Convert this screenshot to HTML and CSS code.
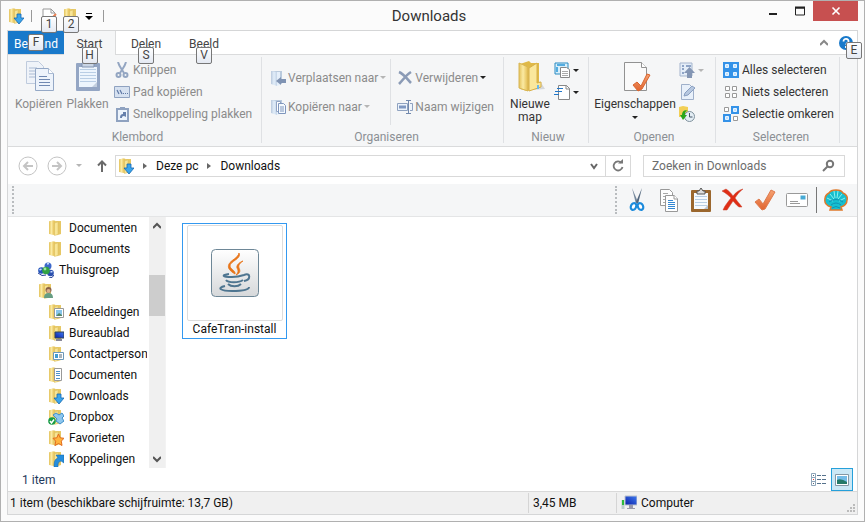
FILE: index.html
```html
<!DOCTYPE html>
<html lang="nl">
<head>
<meta charset="utf-8">
<title>Downloads</title>
<link rel="stylesheet" href="styles.css">
</head>
<body>
<svg class="defs" aria-hidden="true">
  <defs>
    <linearGradient id="gold" x1="0" x2="1"><stop offset="0" stop-color="#e3c25c"/><stop offset=".45" stop-color="#fbeaa2"/><stop offset="1" stop-color="#e2bb4d"/></linearGradient>
    <linearGradient id="pale" x1="0" x2="1"><stop offset="0" stop-color="#b9c9dd"/><stop offset=".5" stop-color="#e2eefa"/><stop offset="1" stop-color="#c3d3e6"/></linearGradient>
    <linearGradient id="tile" x1="0" x2="0" y1="0" y2="1"><stop offset="0" stop-color="#fff"/><stop offset="1" stop-color="#d6d8da"/></linearGradient>
    <linearGradient id="orange" x1="0" x2="0" y1="0" y2="1"><stop offset="0" stop-color="#f6a272"/><stop offset="1" stop-color="#e0642f"/></linearGradient>
    <linearGradient id="screen" x1="0" x2="1" y1="1" y2="0"><stop offset="0" stop-color="#0a1ea8"/><stop offset="1" stop-color="#3f7bf0"/></linearGradient>
    <symbol id="folder" viewBox="0 0 16 16">
      <path d="M1 1.500 5 .5 8 1h5v13l-5 1-7-1z" fill="#e9cd6c"/>
      <path d="M8 1.500h5V14l-5 1z" fill="#e6c765"/>
      <path d="M1 1.500 6.500.5V15L1 13.500z" fill="url(#gold)"/>
      <path d="M6.500 3 10 1.800V14.500L6.500 15.500z" fill="#f8e596" stroke="#d9b95a" stroke-width=".5"/>
    </symbol>
    <symbol id="down" viewBox="0 0 16 16"><path d="M9 6h4v4h3l-5 6-5-6h3z" fill="#3aa5ec" stroke="#1467b2" stroke-width=".8"/></symbol>
    <symbol id="palefolder" viewBox="0 0 16 16"><path d="M1 1h11v13H5l-4-1z" fill="#b9cadd"/><path d="M1 1l6 1v14l-6-2z" fill="url(#pale)"/><path d="M7 2h3v13l-3 1z" fill="#e5effa"/></symbol>
    <symbol id="check" viewBox="0 0 24 24"><path d="M2 14 6 11l4 5L18 2l4 2L12 21 9 22z" fill="url(#orange)" stroke="#dd7b4e"/></symbol>
    <symbol id="sel-on" viewBox="0 0 8 8"><path d="M0 0h8v8H0z" fill="#3492e8"/><path d="M2.500 2.500h3v3h-3z" fill="#bfe1ff" stroke="#e9f5ff"/></symbol>
    <symbol id="sel-off" viewBox="0 0 8 8"><path d="M1.500 1.500h4v4h-4z" fill="#fff" stroke="#999"/></symbol>
  </defs>
</svg>

<div class="window">
  <header class="titlebar">
    <div class="quick">
      <svg class="i16" viewBox="0 0 16 16"><use href="#folder"/><use href="#down"/></svg>
      <span class="quick-sep"></span>
      <button class="tool" aria-label="Eigenschappen"><svg class="i16" viewBox="0 0 16 16"><path d="M2 1h8l4 4v10H2z" fill="#fff" stroke="#999"/><path d="M10 1v4h4" fill="none" stroke="#999"/><path d="M12 9l3-3" fill="none" stroke="#ed8050" stroke-width="2"/></svg><kbd class="tip">1</kbd></button>
      <button class="tool" aria-label="Nieuwe map"><svg class="i16"><use href="#folder"/></svg><kbd class="tip">2</kbd></button>
      <button class="tool" aria-label="Werkbalk aanpassen"><svg class="i8" viewBox="0 0 8 8"><path d="M1 1.500h6" stroke="#000"/><path d="M0 4h8L4 8z"/></svg></button>
      <span class="quick-sep"></span>
    </div>
    <h1>Downloads</h1>
    <div class="controls">
      <button aria-label="Minimaliseren"><svg viewBox="0 0 10 10"><path d="M1 8h8" stroke="#222" stroke-width="2"/></svg></button>
      <button aria-label="Maximaliseren"><svg viewBox="0 0 10 10"><path d="M.5 2h9v7h-9z" fill="none" stroke="#222"/><path d="M0 1.500h10" stroke="#222" stroke-width="2"/></svg></button>
      <button class="close" aria-label="Sluiten"><svg viewBox="0 0 10 10"><path d="M1.500 1.500l7 7m0-7-7 7" stroke="#fff" stroke-width="1.600"/></svg></button>
    </div>
  </header>

  <div class="frame">
    <nav class="tabs">
      <button class="tab file">Bestand<kbd class="tip">F</kbd></button>
      <button class="tab active">Start<kbd class="tip">H</kbd></button>
      <button class="tab">Delen<kbd class="tip">S</kbd></button>
      <button class="tab">Beeld<kbd class="tip">V</kbd></button>
      <span class="grow"></span>
      <button class="tool" aria-label="Lint samenvouwen"><svg class="i8" viewBox="0 0 8 8"><path d="M0 6l4-4 4 4" fill="none" stroke="#888" stroke-width="2"/></svg></button>
      <button class="tool help" aria-label="Help"><svg class="i14" viewBox="0 0 14 14"><circle cx="7" cy="7" r="7" fill="#1979ca"/><path d="M4.500 5.500c0-4 5.500-3 5 0-.3 1.500-2.300 1.500-2.300 3.300M7 10v2" fill="none" stroke="#fff" stroke-width="1.800"/></svg><kbd class="tip">E</kbd></button>
    </nav>

    <div class="ribbon">
      <section class="group clip">
        <div class="body">
          <button class="big off"><svg viewBox="0 0 32 32"><g fill="#edf3fb" stroke="#a9bad3"><path d="M3.500 1.500h12l5 5v17h-17z" opacity=".7"/><path d="M6 8h8m-8 3h7m-7 3h7m-7 3h7"/><path d="M12.500 8.500h13l5 5v17h-18z" stroke="#94a8c6"/><path d="M25.500 8.500v5h5" fill="#fff"/><path d="M16 16.500h8m-8 3h11m-11 3h11m-11 3h11" stroke="#6f88b2"/></g></svg>Kopiëren</button>
          <button class="big off"><svg viewBox="0 0 32 32"><rect x="4" y="3" width="24" height="28" rx="1" fill="#94a6c4"/><path d="M7 7h18v20H7z" fill="#edf5fd"/><path d="M8 9.500h16m-16 3h16m-16 3h16m-16 3h16m-16 3h16" stroke="#b9cee5"/><path d="M10 7V3h3l3-3 3 3h3v4z" fill="#c9d5e5" stroke="#8395b3"/><path d="M20 27h5v-5z" fill="#c3cfdf"/></svg>Plakken</button>
          <div class="stack">
            <button class="cmd off"><svg viewBox="0 0 16 16"><g fill="none" stroke="#94a6c2" stroke-width="2"><path d="M4 0c1 4 3 6 6 11M12 0C11 4 9 6 6 11"/><circle cx="4.500" cy="13" r="2"/><circle cx="11.500" cy="13" r="2"/></g></svg>Knippen</button>
            <button class="cmd off"><svg viewBox="0 0 16 16"><path d="M.5 2.500h15v11H.5z" fill="#d6e1f0" stroke="#8fa2c0"/><path d="M3 6l2 4m1-4 2 4m1-.5h1m1 0h1m1 0h1" stroke="#5f79a6" stroke-width="1.200"/></svg>Pad kopiëren</button>
            <button class="cmd off"><svg viewBox="0 0 16 16"><path d="M3 3h11v12H3z" fill="#edf4fc" stroke="#8fa2c0" stroke-width="2"/><path d="M6 1h5v3H6z" fill="#8fa2c0"/><path d="M6 12c0-3 1-4 3-4V6h3v5l-2-1c-2 0-2 1-2 2z" fill="#6680ac"/></svg>Snelkoppeling plakken</button>
          </div>
        </div>
        <h2>Klembord</h2>
      </section>

      <section class="group organise">
        <div class="body pair">
          <div class="stack">
            <button class="cmd off"><svg viewBox="0 0 16 16"><use href="#palefolder"/><path d="M6 11l5-4v2h5v4h-5v2z" fill="#7f93b3"/></svg>Verplaatsen naar<i class="caret"></i></button>
            <button class="cmd off"><svg viewBox="0 0 16 16"><use href="#palefolder"/><path d="M6.500 2.500h4v10h-4z" fill="#fff" stroke="#91a4c4"/><path d="M8.500 4.500h5l2 2v8h-7z" fill="#f5faff" stroke="#7f96bd"/><path d="M10 8h4m-4 2h4m-4 2h4" stroke="#7f96bd"/></svg>Kopiëren naar<i class="caret"></i></button>
          </div>
          <div class="stack ruled">
            <button class="cmd off"><svg viewBox="0 0 16 16"><path d="M2 2c5 2 8 7 12 11M14 2C9 5 6 10 2 14" fill="none" stroke="#8b9bb6" stroke-width="2.600"/></svg>Verwijderen<i class="caret dark"></i></button>
            <button class="cmd off"><svg viewBox="0 0 16 16"><path d="M.5 4.500h10v7H.5zM13 4.500h2.500v7H13" fill="#edf4fc" stroke="#8fa2c0"/><path d="M2 6.500h7v3H2z" fill="#7f98c2"/><path d="M9 1.500h5m-5 13h5M11.500 2v12" stroke="#7188ad"/></svg>Naam wijzigen</button>
          </div>
        </div>
        <h2>Organiseren</h2>
      </section>

      <section class="group new">
        <div class="body">
          <button class="big"><svg viewBox="0 0 32 32"><path d="M18 30l13-1-5-8z" fill="#d4d7da"/><path d="M6 4l9-3 2 2h8v20l1 4-13 4-7-2z" fill="#dfb948"/><path d="M15 8l8-5v20l4-1v5l-12 4z" fill="#fae79c" stroke="#d8b048"/><path d="M5 3l9 4v24l-9-3z" fill="url(#gold)" stroke="#d8b654"/><path d="M24 25v4" stroke="#69b7ed" stroke-width="2"/></svg>Nieuwe<br>map</button>
          <div class="stack">
            <button class="cmd"><svg viewBox="0 0 16 16"><path d="M1 1h13v11H1z" fill="#d9effa" stroke="#288bc2"/><path d="M3 3h8M3 5v5" stroke="#53ace0" stroke-width="2"/><path d="M6.500 5.500h6l3 2v8h-9z" fill="#fff" stroke="#888"/><path d="M8 9.500h6m-6 2h6m-6 2h6" stroke="#aaa"/></svg><i class="caret dark"></i></button>
            <button class="cmd"><svg viewBox="0 0 16 16"><path d="M4.500 1.500h8l3 3v11h-11z" fill="#fff" stroke="#888"/><path d="M12 1v4h4" fill="none" stroke="#888"/><path d="M3 4.500h6M1 7.500h7M0 10.500h5" stroke="#2277c9"/></svg><i class="caret dark"></i></button>
          </div>
        </div>
        <h2>Nieuw</h2>
      </section>

      <section class="group open">
        <div class="body">
          <button class="big"><svg viewBox="0 0 32 32"><path d="M5.500 2.500h17l5 5v23h-22z" fill="#fafafa" stroke="#929292"/><path d="M22.500 2.500v5h5" fill="#fff" stroke="#929292"/><path d="M14 25l4-3 4 4 6-12 3 1-8 14-4 2z" fill="url(#orange)" stroke="#d9652f"/></svg>Eigenschappen<i class="caret dark"></i></button>
          <div class="stack">
            <button class="cmd off"><svg viewBox="0 0 16 16"><path d="M1 1h12v13H1z" fill="#e4edf8" stroke="#a5b5cd"/><path d="M3 4h2m2 0h5M3 7h2m-2 4h2" stroke="#8ea4c7" stroke-width="2"/><path d="M10.500 5l5.500 6h-3v5H8v-5H5z" fill="#8496b4"/></svg><i class="caret"></i></button>
            <button class="cmd off"><svg viewBox="0 0 16 16"><path d="M2.500.5h8l4 4v11h-12z" fill="#e8f0fa" stroke="#9fb0ca"/><path d="M5 12l1-3 7-7 3 2-7 7z" fill="#b6c7df" stroke="#899fc1"/></svg></button>
            <button class="cmd"><svg viewBox="0 0 16 16"><path d="M0 1l4-1 5 1v10H0z" fill="#f2cf55"/><circle cx="10.500" cy="10.500" r="5" fill="#e4eef5" stroke="#7f919c"/><path d="M10.500 7v4h3" fill="none" stroke="#456"/><path d="M9 5c-3 0-3 2-3 4h2l-4 5-3-5h2c0-4 3-6 6-4z" fill="#29a61d"/></svg></button>
          </div>
        </div>
        <h2>Openen</h2>
      </section>

      <section class="group select">
        <div class="body">
          <div class="stack">
            <button class="cmd"><svg viewBox="0 0 16 16"><use href="#sel-on" width="8" height="8"/><use href="#sel-on" x="8" width="8" height="8"/><use href="#sel-on" y="8" width="8" height="8"/><use href="#sel-on" x="8" y="8" width="8" height="8"/></svg>Alles selecteren</button>
            <button class="cmd"><svg viewBox="0 0 16 16"><use href="#sel-off" x="1" y="1" width="8" height="8"/><use href="#sel-off" x="8" y="1" width="8" height="8"/><use href="#sel-off" x="1" y="8" width="8" height="8"/><use href="#sel-off" x="8" y="8" width="8" height="8"/></svg>Niets selecteren</button>
            <button class="cmd"><svg viewBox="0 0 16 16"><use href="#sel-off" width="8" height="8"/><use href="#sel-on" x="8" width="8" height="8"/><use href="#sel-on" y="8" width="8" height="8"/><use href="#sel-off" x="9" y="9" width="8" height="8"/></svg>Selectie omkeren</button>
          </div>
        </div>
        <h2>Selecteren</h2>
      </section>
    </div>

    <div class="navbar">
      <button class="tool" aria-label="Vorige"><svg class="i20" viewBox="0 0 20 20"><g fill="none" stroke="#c4c4c4"><circle cx="10" cy="10" r="9"/><path d="M15 10H6m4-4-4 4 4 4" stroke-width="2"/></g></svg></button>
      <button class="tool" aria-label="Volgende"><svg class="i20" viewBox="0 0 20 20"><g fill="none" stroke="#c4c4c4"><circle cx="10" cy="10" r="9"/><path d="M5 10h9m-4-4 4 4-4 4" stroke-width="2"/></g></svg></button>
      <button class="tool" aria-label="Recente locaties"><i class="caret"></i></button>
      <button class="tool up" aria-label="Omhoog"><svg class="i14" viewBox="0 0 14 14"><path d="M7 13V2M3 6.500l4-4 4 4" fill="none" stroke="#6a6a6a" stroke-width="2"/></svg></button>
      <div class="address">
        <svg class="i16" viewBox="0 0 16 16"><use href="#folder"/><use href="#down"/></svg>
        <i class="crumb"></i><a href="#pc">Deze pc</a><i class="crumb"></i><a href="#downloads">Downloads</a>
        <span class="grow"></span>
        <button class="tool" aria-label="Vorige locaties"><svg class="i8" viewBox="0 0 8 8"><path d="M1 2l3 4 3-4" fill="none" stroke="#666" stroke-width="2"/></svg></button>
        <button class="refresh" aria-label="Vernieuwen"><svg class="i14" viewBox="0 0 14 14"><path d="M10.500 4A4.500 4.500 0 1 0 11.500 8" fill="none" stroke="#777" stroke-width="1.800"/><path d="M7 4.500h5V0z" fill="#777"/></svg></button>
      </div>
      <label class="search"><input type="search" placeholder="Zoeken in Downloads" aria-label="Zoeken in Downloads"><svg class="i14" viewBox="0 0 14 14"><g fill="none" stroke="#777" stroke-width="2"><circle cx="8" cy="5" r="3.200"/><path d="M5.500 7.500 1 12"/></g></svg></label>
    </div>

    <div class="toolbar">
      <span class="grip"></span><span class="grow"></span><span class="grip"></span>
      <button class="tool" aria-label="Knippen"><svg class="i24" viewBox="0 0 24 24"><path d="M7 0l6 14-2 2z" fill="#75889c"/><path d="M17 0l-6 14 2 2z" fill="#52677e"/><g fill="#fff" stroke="#1d8bdc" stroke-width="2.200"><ellipse cx="8.500" cy="18.500" rx="2.600" ry="3.500" transform="rotate(25 8.500 18.500)"/><ellipse cx="15.500" cy="18.500" rx="2.600" ry="3.500" transform="rotate(-25 15.500 18.500)"/></g></svg></button>
      <button class="tool" aria-label="Kopiëren"><svg class="i24" viewBox="0 0 24 24"><g fill="#fff" stroke="#999"><path d="M3.500 1.500h9l3 3v13h-12z"/><path d="M8.500 7.500h9l3 3v13h-12z"/><path d="M17 7v4h4"/></g><path d="M6 5.500h5m-5 3h2m-2 3h2m-2 3h2" stroke="#aaa"/><path d="M11 12.500h5m-5 2h7m-7 2h7m-7 2h7m-7 2h7" stroke="#3488d3"/></svg></button>
      <button class="tool" aria-label="Plakken"><svg class="i24" viewBox="0 0 24 24"><rect x="2" y="2" width="20" height="22" rx="1" fill="#9b672e"/><path d="M5 5h14v16H5z" fill="#f6fafe"/><path d="M6 8.500h12m-12 3h12m-12 3h12m-12 3h12" stroke="#b7cee4"/><path d="M8 6V3h2l2-3 2 3h2v3z" fill="#ddd" stroke="#555"/><path d="M15 21h4v-4z" fill="#b9c4d0"/></svg></button>
      <button class="tool" aria-label="Verwijderen"><svg class="i24" viewBox="0 0 24 24"><path d="M1 3l4-2c3 2 5 4 7 7 3-4 6-6 10-7-4 3-6 6-8 9 2 3 4 5 7 9h-3c-3-2-4-4-6-6-2 3-4 6-6 9H2c2-5 5-8 8-12C8 8 5 5 1 3z" fill="#df2e16" stroke="#c9442f" stroke-width=".5"/></svg></button>
      <button class="tool" aria-label="Eigenschappen"><svg class="i24"><use href="#check"/></svg></button>
      <button class="tool" aria-label="E-mail"><svg class="i24" viewBox="0 0 24 24"><rect x="1.500" y="5.500" width="21" height="13" rx="1" fill="#fff" stroke="#999"/><path d="M15.500 7.500h5v4h-5z" fill="#46aad5"/><path d="M5 13.500h8m-8 2h10" stroke="#999"/></svg></button>
      <span class="bar"></span>
      <button class="tool" aria-label="Schelp"><svg class="i24" viewBox="0 0 24 24"><path d="M6 22l1-3C3 18 0 15 1 11 1 8 3 6 5 5c1-2 4-3 7-3s6 1 7 3c3 1 5 4 4 7 0 4-3 6-6 7l1 3z" fill="#16bfcf" stroke="#df792b" stroke-width="1.500"/><path d="M9 13 3 10m7 1L6 6m5 4-1-7m3 7 1-7m0 8 4-5m-3 7 6-3" stroke="#8af0f0"/><path d="M5 14q7-5 14 0M7 17q5-4 10 0M8 20q4-3 8 0" fill="none" stroke="#0e93b5"/></svg></button>
    </div>

    <main class="main">
      <nav class="tree">
        <ul>
          <li><svg><use href="#folder"/></svg>Documenten</li>
          <li><svg><use href="#folder"/></svg>Documents</li>
          <li class="root"><svg viewBox="0 0 16 16"><circle cx="10" cy="4" r="3.500" fill="#3c68ca"/><circle cx="3.500" cy="8.500" r="3.300" fill="#2454bb"/><circle cx="12.500" cy="11" r="3.300" fill="#294fae"/><circle cx="8" cy="8.500" r="3.800" fill="#32a344"/><circle cx="7" cy="7" r="1.400" fill="#9de6a5"/><path d="M9 2l2-.5M1.500 8l2-1m9 3 2-.5" stroke="#c9dcff" stroke-width="1.500"/><path d="M0 11q4 4 8 2m3 3q4 0 5-3" fill="none" stroke="#223e96"/></svg>Thuisgroep</li>
          <li class="root" aria-label="Gebruiker"><svg viewBox="0 0 16 16"><use href="#folder"/><circle cx="10.500" cy="7" r="3" fill="#8a6247"/><circle cx="10.500" cy="8" r="2" fill="#d9ae8b"/><path d="M6 15q0-5 4.500-5t4.500 5z" fill="#669d83"/></svg></li>
          <li><svg viewBox="0 0 16 16"><use href="#folder"/><path d="M6.500 4.500h9v9h-9z" fill="#fff" stroke="#999"/><path d="M8 6h6v6H8z" fill="#87c5eb"/><path d="M8 12l3-3 3 2v1z" fill="#548567"/></svg>Afbeeldingen</li>
          <li><svg viewBox="0 0 16 16"><use href="#folder"/><path d="M7 7h9v6H7z" fill="url(#screen)" stroke="#345"/><path d="M8 15h6" stroke="#889" stroke-width="2"/></svg>Bureaublad</li>
          <li><svg viewBox="0 0 16 16"><use href="#folder"/><path d="M5.500 6.500h10v7h-10z" fill="#fff" stroke="#6b97b9"/><path d="M7 8h3v4H7z" fill="#3f9cd2"/><path d="M11 9h3m-3 2h3" stroke="#567"/></svg>Contactpersonen</li>
          <li><svg viewBox="0 0 16 16"><use href="#folder"/><path d="M6.500 1.500h7v12h-7z" fill="#fff" stroke="#999"/><path d="M8 4.500h4m-4 2h4m-4 2h4m-4 3h4" stroke="#4e91cc"/></svg>Documenten</li>
          <li><svg viewBox="0 0 16 16"><use href="#folder"/><use href="#down"/></svg>Downloads</li>
          <li><svg viewBox="0 0 16 16"><use href="#folder"/><path d="M5 6l3-2 3 2 3-2 2 3-2 2 2 3-4 3-4-3 1-2z" fill="#8dc6ee" stroke="#3e8fc9"/><circle cx="4" cy="12" r="3.800" fill="#169b45"/><path d="M2 12l1.500 2L6 10.500" fill="none" stroke="#fff" stroke-width="1.500"/></svg>Dropbox</li>
          <li><svg viewBox="0 0 16 16"><use href="#folder"/><path d="M10.500 4l1.700 3.800 3.800.5-2.700 2.800.7 4.400-3.500-2L7 15.500l.7-4.400L5 8.300l3.800-.5z" fill="#ffb33e" stroke="#e26b1d"/></svg>Favorieten</li>
          <li><svg viewBox="0 0 16 16"><use href="#folder"/><path d="M6 16c0-6 1-8 4-9L8 4h8v8l-3-2c-3 1-3 3-3 6z" fill="#258dde" stroke="#1265a7" stroke-width=".5"/></svg>Koppelingen</li>
        </ul>
      </nav>
      <div class="scroll">
        <button aria-label="Omhoog schuiven"><svg class="i8" viewBox="0 0 8 8"><path d="M0 6l4-4 4 4" fill="none" stroke="#555" stroke-width="2"/></svg></button>
        <span class="track"><span class="thumb"></span></span>
        <button aria-label="Omlaag schuiven"><svg class="i8" viewBox="0 0 8 8"><path d="M0 2l4 4 4-4" fill="none" stroke="#555" stroke-width="2"/></svg></button>
      </div>
      <div class="files">
        <button class="item">
          <span class="thumbnail"><svg viewBox="0 0 48 48"><rect x=".5" y=".5" width="47" height="47" rx="4" fill="url(#tile)" stroke="#6e8797"/><path d="M28 4c3 6-9 8-9 13 0 3 6 5 5 8-5-3-8-6-6-10 2-4 9-6 10-11zM32 12c-3 1-7 4-6 7 1 2 2 4-1 7 5-2 4-5 3-7-1-3 1-5 4-7z" fill="#e87519" stroke="#e87519" stroke-width=".8"/><g fill="none" stroke="#4e7590" stroke-width="2"><path d="M18 25c-8 1-7 3 3 3 6 0 9-1 12-2M15 31c2 3 13 3 17 0M17 35c3 3 10 3 13 0M33 26c7-3 7 5 0 6M14 37c-9 2-4 5 7 5 8 0 17-1 17-4"/></g></svg></span>
          CafeTran-install
        </button>
      </div>
    </main>

    <div class="details">
      <span>1 item</span><span class="grow"></span>
      <button class="view" aria-label="Details"><svg viewBox="0 0 16 16"><g fill="#fff" stroke="#8da5b9"><path d="M.5 1.500h4v4h-4zM.5 5.500h4v4h-4zM.5 9.500h4v4h-4z"/></g><path d="M2 3.500h1m-1 8h1" stroke="#567"/><path d="M2 7.500h1" stroke="#e33"/><path d="M6 3.500h4m1 0h4m-9 4h4m1 0h4m-9 4h4m1 0h4" stroke="#56728c"/></svg></button>
      <button class="view on" aria-label="Grote pictogrammen"><svg viewBox="0 0 16 16"><path d="M1.500 2.500h13v11h-13z" fill="#fff" stroke="#8598a5"/><path d="M3 4h10v8H3z" fill="#75bce7"/><path d="M3 8q4-2 10 2v2H3z" fill="#257a69"/></svg></button>
    </div>

    <footer class="status">
      <span class="grow">1 item (beschikbare schijfruimte: 13,7 GB)</span>
      <span class="cell size">3,45 MB</span>
      <span class="cell place"><svg class="i16" viewBox="0 0 16 16"><path d="M4 1h12v9H4z" fill="url(#screen)" stroke="#bcc3cd"/><path d="M8 10h4v3h2v1H6v-1h2z" fill="#99a"/><path d="M.5 5h3v9h-3z" fill="#bcc"/><path d="M2 5v5" stroke="#2cba3a" stroke-width="2"/></svg>Computer</span>
      <svg class="i8" viewBox="0 0 8 8"><path d="M6 0h2v2H6zM3 3h2v2H3zM6 3h2v2H6zM0 6h2v2H0zM3 6h2v2H3zM6 6h2v2H6z" fill="#bbb"/></svg>
    </footer>
  </div>
</div>
</body>
</html>
```

FILE: styles.css
```css
* { box-sizing: border-box; }
body { margin: 0; font: 12px/16px Roboto, "Open Sans", sans-serif; color: #111; }
button { margin: 0; padding: 0; border: 0; background: none; font: inherit; color: inherit; }
svg { display: block; flex: none; }
h1, h2, ul { margin: 0; padding: 0; font-weight: 400; list-style: none; }
.defs { position: absolute; width: 0; height: 0; }
.grow { flex: 1; }
.i8 { width: 8px; height: 8px; }
.i14 { width: 14px; height: 14px; }
.i16 { width: 16px; height: 16px; }
.i20 { width: 20px; height: 20px; }
.i24 { width: 24px; height: 24px; }
.tool { position: relative; display: flex; align-items: center; justify-content: center; flex: none; }

.window { display: flex; flex-direction: column; min-height: 100vh; padding: 0 6px 6px 7px; border: 1px solid #b0b0b0; background: #fbfbfb; }
.frame { display: flex; flex-direction: column; flex: 1; border: 1px solid #d5d6d7; border-left: 0; background: #fff; box-shadow: -1px 0 #d5d6d7; }

.titlebar { display: grid; grid-template-columns: 1fr auto 1fr; align-items: center; height: 29px; }
.titlebar h1 { padding-right: 8px; font-size: 15px; line-height: 20px; color: #333; }
.quick { display: flex; align-items: center; gap: 6px; }
.quick-sep { width: 1px; height: 12px; margin: 0 3px 0 1px; background: #999; }
.quick-sep:last-child { margin-left: 4px; }
.controls { display: flex; justify-content: flex-end; align-self: start; }
.controls button { display: flex; align-items: center; justify-content: center; width: 27px; height: 20px; }
.controls svg { width: 10px; height: 10px; }
.controls .close { width: 45px; background: #c75050; }

.tip { position: absolute; z-index: 2; left: 50%; top: 16px; width: 16px; height: 17px; margin-left: -8px; border: 1px solid #777; border-radius: 2px; background: linear-gradient(#fff, #e4e9f2); font: 12px/15px Roboto, sans-serif; color: #444; text-align: center; }
.quick .tip { top: 8px; }
.file .tip { top: 3px; }
.help .tip { top: 11px; left: 19px; }

.tabs { display: flex; height: 24px; box-shadow: inset 0 -1px #dadbdc; }
.tab { position: relative; width: 58px; height: 24px; padding-top: 2px; color: #444; }
.tab.file { width: 56px; height: 23px; background: #1979ca; color: #fff; }
.tab.active { width: 52px; border-right: 1px solid #dadbdc; background: #f5f6f7; margin-right: 1px; }
.tabs .tool { width: 22px; }

.ribbon { display: flex; min-height: 92px; padding: 2px 0 3px; border-bottom: 1px solid #dadbdc; background: #f5f6f7; color: #333; }
.group { display: flex; flex-direction: column; justify-content: space-between; border-right: 1px solid #dfe1e4; }
.group h2 { font-size: 12px; line-height: 12px; color: #8b8f94; text-align: center; }
.body { display: flex; padding-top: 2px; }
.clip { width: 254px; padding-left: 6px; }
.organise { width: 242px; padding-left: 8px; }
.new { width: 85px; padding-left: 4px; }
.open { width: 127px; padding-left: 4px; }
.select { width: 124px; padding-left: 7px; }
.off { color: #8b8b8b; }
.big { display: flex; flex-direction: column; align-items: center; width: 49px; padding-top: 1px; line-height: 13px; white-space: nowrap; }
.big svg { width: 32px; height: 32px; margin-bottom: 6px; }
.new .big { width: 44px; }
.open .big { width: 84px; }
.big .caret { margin: 5px 0 0; }
.stack { display: flex; flex-direction: column; margin-left: 2px; }
.cmd { display: flex; align-items: center; gap: 3px; height: 22px; white-space: nowrap; }
.cmd svg { width: 16px; height: 16px; }
.select .stack { margin-left: 0; }
.pair .cmd { height: 29px; gap: 2px; }
.pair .stack { margin-left: 0; padding: 4px 0; }
.pair .ruled { margin-left: 4px; padding-left: 6px; border-left: 1px solid #dfe1e4; }
.caret { flex: none; border: 3px solid transparent; border-top-color: #b5b5b5; border-bottom: 0; }
.caret.dark { border-top-color: #222; }

.navbar { display: flex; align-items: center; height: 37px; padding: 0 12px 0 10px; gap: 9px; }
.navbar .up { margin: 0 -3px 0 4px; }
.address, .search { display: flex; align-items: center; height: 22px; border: 1px solid #d9d9d9; background: #fff; }
.address { flex: 1; padding-left: 2px; gap: 7px; }
.address a { color: #111; text-decoration: none; }
.crumb { border: 3px solid transparent; border-left: 4px solid #666; border-right: 0; margin: 0 2px; }
.refresh { display: flex; align-items: center; justify-content: center; width: 25px; height: 20px; border-left: 1px solid #d9d9d9; }
.search { width: 202px; margin-left: 3px; padding: 0 8px; }
.search input { flex: 1; min-width: 0; padding: 0; border: 0; outline: 0; background: none; font: inherit; }
.search input::placeholder { color: #6d6d6d; opacity: 1; }

.toolbar { display: flex; align-items: center; height: 33px; padding: 0 9px 0 4px; border-bottom: 1px solid #e4e5e6; background: #f5f6f7; gap: 8px; }
.grip { height: 28px; border-left: 2px dotted #b9bcbf; }
.bar { width: 1px; height: 26px; margin: 0 -1px; background: #777; }

.main { display: flex; flex: 1; min-height: 251px; }
.tree { width: 139px; height: 251px; overflow: hidden; }
.tree li { display: flex; align-items: center; height: 21px; padding-left: 40px; gap: 5px; white-space: nowrap; }
.tree li.root { padding-left: 30px; }
.tree svg { width: 16px; height: 16px; }
.scroll { display: flex; flex-direction: column; width: 16px; margin-left: 2px; background: #f0f0f0; }
.scroll button { display: flex; align-items: center; justify-content: center; height: 18px; }
.track { flex: 1; padding-top: 40px; }
.thumb { display: block; height: 41px; background: #cdcdcd; }
.files { flex: 1; padding: 6px 16px; border-left: 1px solid #f3f3f3; }
.item { display: flex; flex-direction: column; align-items: center; width: 105px; height: 116px; padding-top: 1px; border: 1px solid #3399f0; white-space: nowrap; }
.thumbnail { display: flex; align-items: center; justify-content: center; width: 96px; height: 96px; border: 1px solid #ddd; border-radius: 2px; }
.thumbnail svg { width: 48px; height: 48px; }

.details { display: flex; align-items: center; height: 23px; padding: 0 4px 0 14px; color: #1e395b; }
.view { display: flex; align-items: center; justify-content: center; width: 24px; height: 23px; }
.view svg { width: 16px; height: 16px; }
.view.on { width: 22px; border: 1px solid #26a0da; background: #cbe8f6; }
.status { display: flex; align-items: center; height: 23px; padding-left: 2px; border-top: 1px solid #d9d9d9; background: #f0f0f0; }
.cell { display: flex; align-items: center; height: 20px; gap: 4px; padding-left: 4px; border-left: 1px solid #d5d5d5; }
.size { width: 88px; }
.place { width: 231px; }
.status > svg { align-self: flex-end; margin: 0 2px 2px 0; }
```
